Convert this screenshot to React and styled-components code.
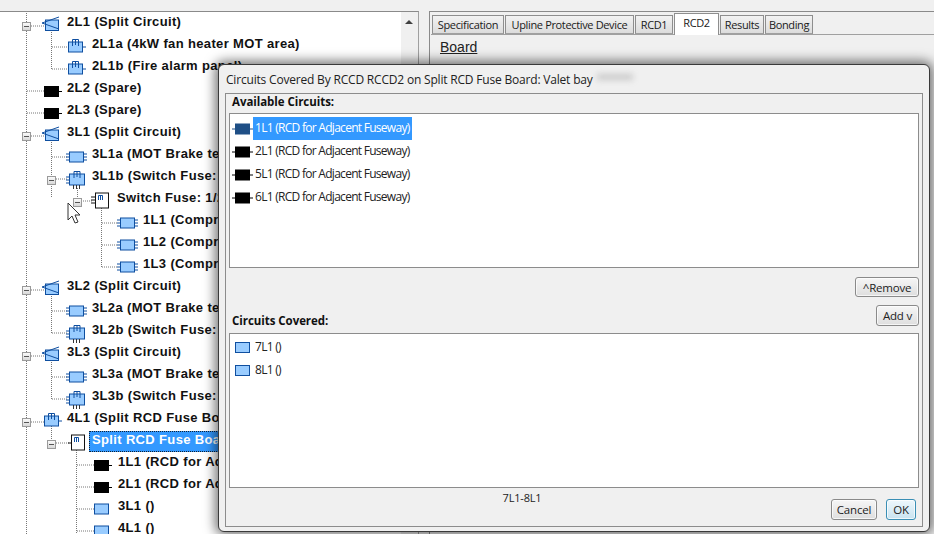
import styled, { createGlobalStyle } from 'styled-components';

const GlobalStyle = createGlobalStyle`
  html, body {
    margin: 0;
    padding: 0;
    background: #f0f0f0;
  }
  * {
    box-sizing: border-box;
  }
`;

const Page = styled.div`
  position: relative;
  width: 934px;
  height: 534px;
  overflow: hidden;
  background: #f0f0f0;
  padding-top: 11px;
  display: flex;
  font-family: 'Open Sans', 'Noto Sans', sans-serif;
`;

const TreePanel = styled.div`
  position: relative;
  width: 419px;
  flex: none;
  background: #fff;
  border-top: 1px solid #8a8a8a;
  border-right: 1px solid #a0a0a0;
  display: flex;
  overflow: hidden;
`;

const TreeLines = styled.svg`
  position: absolute;
  left: 0;
  top: -12px;
  width: 400px;
  height: 534px;
`;

const TreeBody = styled.div`
  position: relative;
  flex: 1;
  padding-top: 1px;
`;

const Row = styled.div`
  height: 22px;
  display: flex;
  align-items: flex-start;
  padding-left: ${({ $left }) => $left}px;
`;

const IconSlot = styled.svg`
  position: relative;
  width: 20px;
  height: 22px;
  flex: none;
  margin-right: ${({ $gap }) => $gap}px;
  overflow: visible;
`;

const RowLabel = styled.span`
  position: relative;
  font-family: 'Liberation Sans', Arial, sans-serif;
  font-weight: 700;
  font-size: 13px;
  letter-spacing: 0.35px;
  line-height: 18px;
  padding: 0 3px;
  height: ${({ $selected }) => ($selected ? '21px' : '18px')};
  white-space: nowrap;
  color: ${({ $selected }) => ($selected ? '#fff' : '#111')};
  background: ${({ $selected }) => ($selected ? '#3399ff' : 'transparent')};
  outline: ${({ $selected }) => ($selected ? '1px dotted #123' : 'none')};
  outline-offset: -1px;
`;

const Expander = styled.div`
  position: absolute;
  left: ${({ $x }) => $x - 4}px;
  top: ${({ $y }) => $y - 16}px;
  width: 9px;
  height: 9px;
  border: 1px solid #9a9a9a;
  background: linear-gradient(#fafafa, #d8d8d8);
  display: flex;
  align-items: center;
  justify-content: center;
  &::after {
    content: '';
    width: 5px;
    height: 1px;
    background: #555;
  }
`;

const ScrollBar = styled.div`
  width: 17px;
  flex: none;
  background: #f0f0f0;
  display: flex;
  justify-content: center;
  padding: 8px 2px 0 0;
`;

const ScrollArrow = styled.div`
  width: 0;
  height: 0;
  border-left: 4px solid transparent;
  border-right: 4px solid transparent;
  border-bottom: 4px solid #404040;
`;

const Cursor = styled.svg`
  position: absolute;
  left: 67px;
  top: 202px;
  width: 14px;
  height: 24px;
`;

const RightPanel = styled.div`
  flex: 1;
  margin-left: 10px;
  display: flex;
  flex-direction: column;
  border-top: 1px solid #8a8a8a;
  border-left: 1px solid #8a8a8a;
  padding: 1px 0 0 1px;
`;

const TabStrip = styled.div`
  display: flex;
  align-items: flex-end;
  height: 22px;
  padding-left: 1px;
  border-bottom: 1px solid #a0a0a0;
`;

const Tab = styled.div`
  width: ${({ $w }) => $w}px;
  height: ${({ $active }) => ($active ? '22px' : '19px')};
  margin-bottom: ${({ $active }) => ($active ? '-1px' : '0')};
  padding-bottom: ${({ $active }) => ($active ? '4px' : '0')};
  margin-right: 1px;
  display: flex;
  align-items: center;
  justify-content: center;
  font-size: 11px;
  letter-spacing: -0.35px;
  color: #1a1a1a;
  white-space: nowrap;
  background: ${({ $active }) =>
    $active ? '#fff' : 'linear-gradient(#f2f2f2, #dcdcdc)'};
  border: 1px solid #8e8e8e;
  border-bottom: ${({ $active }) => ($active ? 'none' : '1px solid #a0a0a0')};
`;

const BoardLink = styled.div`
  font-family: 'Liberation Sans', Arial, sans-serif;
  font-size: 14px;
  text-decoration: underline;
  color: #222;
  padding: 4px 0 0 9px;
`;

const Dialog = styled.div`
  position: absolute;
  left: 218px;
  top: 64px;
  width: 712px;
  height: 468px;
  background: #f0f0f0;
  border: 1px solid #3a3a3a;
  border-radius: 6px;
  box-shadow: 0 0 12px 3px rgba(0, 0, 0, 0.55);
  padding: 6px 6px 4px 6px;
  display: flex;
  flex-direction: column;
`;

const GlassGhost = styled.div`
  position: absolute;
  left: 378px;
  top: 9px;
  width: 36px;
  height: 6px;
  background: rgba(110, 110, 110, 0.3);
  filter: blur(3px);
`;

const DialogTitle = styled.div`
  height: 22px;
  font-size: 12px;
  letter-spacing: -0.19px;
  color: #222;
  line-height: 17px;
  white-space: nowrap;
  padding-left: 1px;
`;

const GroupFrame = styled.div`
  flex: 1;
  border: 1px solid #8c8c8c;
  padding: 0 3px;
  display: flex;
  flex-direction: column;
  min-height: 0;
`;

const GroupLabel = styled.div`
  font-size: 11.5px;
  font-weight: 700;
  letter-spacing: -0.05px;
  color: #111;
  line-height: 14px;
  padding: ${({ $top }) => $top}px 0 0 3px;
`;

const AvailableHeader = styled.div`
  height: 19px;
`;

const ListBox = styled.div`
  height: 155px;
  flex: none;
  background: #fff;
  border: 1px solid #8c8c8c;
  padding: ${({ $pad }) => $pad}px 0 0 2px;
  display: flex;
  flex-direction: column;
`;

const ListRow = styled.div`
  display: flex;
  align-items: center;
  height: 23px;
`;

const ListIcon = styled.svg`
  width: 21px;
  height: 14px;
  flex: none;
`;

const ListText = styled.span`
  font-size: 12px;
  letter-spacing: -0.72px;
  height: 23px;
  line-height: 22px;
  padding: 0 2px;
  color: ${({ $selected }) => ($selected ? '#fff' : '#222')};
  background: ${({ $selected }) => ($selected ? '#3399ff' : 'transparent')};
  white-space: nowrap;
`;

const RemoveRow = styled.div`
  display: flex;
  justify-content: flex-end;
  height: 37px;
  padding-top: 9px;
`;

const CoveredHeader = styled.div`
  display: flex;
  justify-content: space-between;
  align-items: flex-start;
  height: 28px;
`;

const Button = styled.button`
  height: ${({ $h }) => $h ?? 21}px;
  width: ${({ $w }) => $w}px;
  padding: 0;
  font-family: 'Open Sans', 'Noto Sans', sans-serif;
  font-size: 11.5px;
  letter-spacing: -0.2px;
  color: #222;
  border: 1px solid ${({ $primary }) => ($primary ? '#3a8fb5' : '#8a8a8a')};
  border-radius: 3px;
  background: ${({ $primary }) =>
    $primary
      ? 'linear-gradient(#eef7fc, #c9e3f0)'
      : 'linear-gradient(#f6f6f6, #dedede)'};
  box-shadow: inset 0 0 0 1px rgba(255, 255, 255, 0.7);
`;

const RangeFooter = styled.div`
  display: flex;
  align-items: flex-start;
  flex: 1;
  padding-top: 2px;
`;

const RangeText = styled.div`
  flex: 1;
  text-align: center;
  font-size: 11px;
  letter-spacing: -0.2px;
  color: #222;
  padding-right: 16px;
`;

const FooterButtons = styled.div`
  display: flex;
  gap: 9px;
  padding: 9px 3px 0 0;
`;

const BLUE = '#0f4fa0';
const FILL = '#99ccff';

const BoardIcon = () => (
  <>
    <rect x="1.5" y="8" width="14" height="10" fill={FILL} stroke={BLUE} />
    <path d="M5.500 12V5.500h6V12M8.500 5.500V11" stroke={BLUE} fill="none" />
    <path d="M15.500 13H19" stroke={BLUE} />
  </>
);

const icons = {
  split: (
    <>
      <rect x="2.500" y="8" width="13" height="10.500" fill={FILL} stroke={BLUE} />
      <path d="M-1 11L16 5M-1 11L16 17" stroke={BLUE} fill="none" />
    </>
  ),
  fuse: <BoardIcon />,
  pins: (
    <>
      <rect x="2.500" y="8" width="14" height="10" fill={FILL} stroke={BLUE} />
      <path d="M-1 10h3.500M-1 13h3.500M-1 16h3.500M16.500 10H20M16.500 13H20M16.500 16H20" stroke={BLUE} />
    </>
  ),
  switchFuse: (
    <>
      <rect x="2.500" y="8" width="15" height="11" fill={FILL} stroke={BLUE} />
      <path d="M7 12V5.500h6V12M10 5.500V11" stroke={BLUE} fill="none" />
      <path d="M-1 11h3.500M-1 14h3.500M-1 17h3.500" stroke={BLUE} />
      <path d="M6.500 19v4M9.500 19v4M12.500 19v4" stroke="#333" />
    </>
  ),
  switchBoard: (
    <>
      <rect x="3.500" y="5" width="13" height="15" fill="#fff" stroke="#111" />
      <path d="M6.500 12V7.500h4V12M8.500 7.500V12" stroke={BLUE} fill="none" />
      <path d="M-1 9h4.500M-1 12h4.500M-1 15h4.500" stroke="#111" />
    </>
  ),
  splitBoard: (
    <>
      <rect x="3.500" y="5" width="13" height="15" fill="#fff" stroke="#111" />
      <path d="M6.500 12V7.500h4V12M8.500 7.500V12" stroke={BLUE} fill="none" />
      <path d="M0 13h3.500" stroke="#111" />
    </>
  ),
  spare: (
    <>
      <rect x="1" y="8" width="15" height="11" fill="#000" />
      <path d="M16 13.500h3" stroke="#000" />
    </>
  ),
  plain: <rect x="1.500" y="8" width="14" height="10" fill={FILL} stroke={BLUE} />,
};

const treeRows = [
  { left: 44, icon: 'split', label: '2L1 (Split Circuit)' },
  { left: 68, icon: 'fuse', label: '2L1a (4kW fan heater MOT area)' },
  { left: 68, icon: 'fuse', label: '2L1b (Fire alarm panel)' },
  { left: 44, icon: 'spare', label: '2L2 (Spare)' },
  { left: 44, icon: 'spare', label: '2L3 (Spare)' },
  { left: 44, icon: 'split', label: '3L1 (Split Circuit)' },
  { left: 68, icon: 'pins', label: '3L1a (MOT Brake test)' },
  { left: 68, icon: 'switchFuse', label: '3L1b (Switch Fuse: 1/2)' },
  { left: 93, icon: 'switchBoard', label: 'Switch Fuse: 1/2' },
  { left: 119, icon: 'pins', label: '1L1 (Compressor)' },
  { left: 119, icon: 'pins', label: '1L2 (Compressor)' },
  { left: 119, icon: 'pins', label: '1L3 (Compressor)' },
  { left: 44, icon: 'split', label: '3L2 (Split Circuit)' },
  { left: 68, icon: 'pins', label: '3L2a (MOT Brake test)' },
  { left: 68, icon: 'switchFuse', label: '3L2b (Switch Fuse: 1/2)' },
  { left: 44, icon: 'split', label: '3L3 (Split Circuit)' },
  { left: 68, icon: 'pins', label: '3L3a (MOT Brake test)' },
  { left: 68, icon: 'switchFuse', label: '3L3b (Switch Fuse: 1/2)' },
  { left: 44, icon: 'fuse', label: '4L1 (Split RCD Fuse Board)' },
  { left: 69, icon: 'splitBoard', label: 'Split RCD Fuse Board', selected: true },
  { left: 94, icon: 'spare', label: '1L1 (RCD for Adjacent)' },
  { left: 94, icon: 'spare', label: '2L1 (RCD for Adjacent)' },
  { left: 94, icon: 'plain', label: '3L1 ()' },
  { left: 94, icon: 'plain', label: '4L1 ()' },
];

const expanders = [
  [26, 26],
  [26, 136],
  [51, 180],
  [77, 202],
  [26, 290],
  [26, 356],
  [26, 422],
  [51, 444],
];

const connectors =
  'M26.500 11V534 M27 26H44 M27 91H44 M27 113H44 M27 136H44 M27 290H44 M27 356H44 M27 422H44 ' +
  'M51.500 30V69 M52 47H68 M52 69H68 ' +
  'M51.500 140V180 M52 157H68 M52 179H68 M51.500 184V198 M81 201H92 ' +
  'M77.500 188V198 ' +
  'M101.500 206V267 M102 223H118 M102 245H118 M102 267H118 ' +
  'M51.500 294V333 M52 311H68 M52 333H68 ' +
  'M51.500 360V399 M52 377H68 M52 399H68 ' +
  'M51.500 426V440 M56 443H70 ' +
  'M76.500 450V534 M77 465H94 M77 487H94 M77 509H94 M77 531H94';

const available = ['1L1', '2L1', '5L1', '6L1'];
const covered = ['7L1', '8L1'];

const labelGap = row => (row.left === 44 || row.selected ? 0 : 1);

const App = () => (
  <Page>
    <GlobalStyle />
    <TreePanel>
      <TreeBody>
        <TreeLines viewBox="0 0 400 534">
          <path d={connectors} stroke="#777" strokeDasharray="1 1" fill="none" />
        </TreeLines>
        {expanders.map(([x, y]) => (
          <Expander key={`${x}-${y}`} $x={x} $y={y} />
        ))}
        {treeRows.map((row, idx) => (
          <Row key={idx} $left={row.left}>
            <IconSlot viewBox="1 1 20 22" $gap={labelGap(row)}>
              {icons[row.icon]}
            </IconSlot>
            <RowLabel $selected={row.selected}>{row.label}</RowLabel>
          </Row>
        ))}
      </TreeBody>
      <ScrollBar>
        <ScrollArrow />
      </ScrollBar>
    </TreePanel>
    <RightPanel>
      <TabStrip>
        <Tab $w={72}>Specification</Tab>
        <Tab $w={129}>Upline Protective Device</Tab>
        <Tab $w={38}>RCD1</Tab>
        <Tab $w={45} $active>RCD2</Tab>
        <Tab $w={44}>Results</Tab>
        <Tab $w={48}>Bonding</Tab>
      </TabStrip>
      <BoardLink>Board</BoardLink>
    </RightPanel>
    <Cursor viewBox="0 0 14 24">
      <path d="M1 1v17l4-4 3 7 3-1-3-7h5z" fill="#fff" stroke="#333" />
    </Cursor>
    <Dialog>
      <GlassGhost />
      <DialogTitle>Circuits Covered By RCCD RCCD2 on Split RCD Fuse Board: Valet bay</DialogTitle>
      <GroupFrame>
        <AvailableHeader>
          <GroupLabel $top={1}>Available Circuits:</GroupLabel>
        </AvailableHeader>
        <ListBox $pad={3}>
          {available.map((name, idx) => (
            <ListRow key={name}>
              <ListIcon viewBox="0 0 21 14">
                <path d="M0 7h3M18 7h3" stroke={idx === 0 ? '#1f4f86' : '#000'} />
                <rect x="3" y="1.500" width="15" height="11" fill={idx === 0 ? '#1f4f86' : '#000'} />
              </ListIcon>
              <ListText $selected={idx === 0}>{name} (RCD for Adjacent Fuseway)</ListText>
            </ListRow>
          ))}
        </ListBox>
        <RemoveRow>
          <Button $w={64} $h={20}>^Remove</Button>
        </RemoveRow>
        <CoveredHeader>
          <GroupLabel $top={9}>Circuits Covered:</GroupLabel>
          <Button $w={43}>Add v</Button>
        </CoveredHeader>
        <ListBox $pad={2}>
          {covered.map(name => (
            <ListRow key={name}>
              <ListIcon viewBox="0 0 21 14">
                <rect x="3.500" y="1.500" width="14" height="10" fill={FILL} stroke={BLUE} />
              </ListIcon>
              <ListText>{name} ()</ListText>
            </ListRow>
          ))}
        </ListBox>
        <RangeFooter>
          <RangeText>7L1-8L1</RangeText>
          <FooterButtons>
            <Button $w={46}>Cancel</Button>
            <Button $w={30} $primary>OK</Button>
          </FooterButtons>
        </RangeFooter>
      </GroupFrame>
    </Dialog>
  </Page>
);

export default App;
